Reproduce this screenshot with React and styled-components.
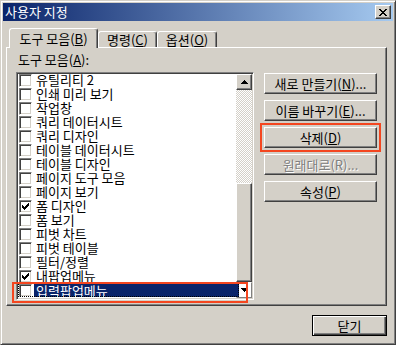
import React from 'react';
import styled, { createGlobalStyle, css } from 'styled-components';

const GlobalStyle = createGlobalStyle`
	html, body {
		margin: 0;
		padding: 0;
		background: #d4d0c8;
	}
	body {
		font-family: "Noto Sans CJK KR", "Noto Sans", sans-serif;
		font-size: 13px;
		color: #000;
	}
	* {
		box-sizing: border-box;
	}
`;

// classic 3D edges
const raised = css`
	border: 1px solid;
	border-color: #fff #404040 #404040 #fff;
	box-shadow: inset -1px -1px #808080;
`;

const sunken = css`
	border: 1px solid;
	border-color: #808080 #fff #fff #808080;
	box-shadow: inset 1px 1px #404040, inset -1px -1px #d4d0c8;
`;

const Window = styled.div`
	width: 396px;
	height: 345px;
	background: #d4d0c8;
	border: 1px solid;
	border-color: #d4d0c8 #404040 #404040 #d4d0c8;
	box-shadow: inset 1px 1px #fff, inset -1px -1px #808080;
	padding: 2px;
	display: flex;
	flex-direction: column;
`;

const TitleBar = styled.div`
	height: 18px;
	flex: 0 0 18px;
	display: flex;
	align-items: center;
	padding: 0 2px 0 2px;
	background: linear-gradient(to right, #0a246a, #a6caf0);
	color: #fff;
`;

const Title = styled.span`
	line-height: 18px;
	font-size: 13px;
`;

const CloseButton = styled.div`
	${raised};
	margin-left: auto;
	width: 16px;
	height: 14px;
	background: #d4d0c8;
	display: grid;
	place-items: center;
`;

const Body = styled.div`
	flex: 1;
	display: flex;
	flex-direction: column;
	padding: 7px 6px 6px 3px;
`;

const TabStrip = styled.div`
	height: 19px;
	display: flex;
	align-items: flex-end;
	padding-left: 3px;
	position: relative;
	z-index: 1;
`;

const Tab = styled.div`
	width: ${(p) => p.$width}px;
	height: ${(p) => (p.$active ? 20 : 16)}px;
	margin-bottom: ${(p) => (p.$active ? -1 : 0)}px;
	padding-top: ${(p) => (p.$active ? 3 : 1)}px;
	background: #d4d0c8;
	border: 1px solid;
	border-bottom: none;
	border-color: #fff #404040 #404040 #fff;
	border-radius: 3px 3px 0 0;
	box-shadow: inset -1px 0 #808080;
	text-align: center;
	line-height: 14px;
	white-space: nowrap;
`;

const Panel = styled.div`
	${raised};
	flex: 0 0 259px;
	display: flex;
	gap: 10px;
	padding: 5px 0 0 9px;
`;

const ListColumn = styled.div`
	width: 238px;
	display: flex;
	flex-direction: column;
`;

const Label = styled.div`
	height: 14px;
	line-height: 14px;
	padding-left: 2px;
	margin-bottom: 5px;
`;

const ListWrap = styled.div`
	position: relative;
`;

const ListBox = styled.div`
	${sunken};
	width: 238px;
	height: 228px;
	padding: 1px;
	background: #fff;
	display: flex;
	overflow: hidden;
`;

const Items = styled.div`
	flex: 1;
	min-width: 0;
	margin-top: -1px;
`;

const Row = styled.div`
	height: 14px;
	display: flex;
	align-items: center;
	padding-left: 1px;
	position: relative;
	z-index: 1;
	${(p) =>
		p.$selected &&
		css`
			margin-right: -3px;
			outline: 1px dotted #000;
			outline-offset: -1px;
		`}
`;

const CheckBox = styled.div`
	${sunken};
	width: 13px;
	height: 13px;
	flex: 0 0 13px;
	background: #fff;
	display: grid;
	place-items: center;
`;

const RowLabel = styled.span`
	margin-left: 2px;
	padding: 0 2px;
	line-height: 14px;
	height: 14px;
	white-space: nowrap;
	${(p) =>
		p.$selected &&
		css`
			flex: 1;
			align-self: stretch;
			height: 13px;
			line-height: 13px;
			margin-top: 1px;
			background: #0a246a;
			color: #fff;
		`}
`;

const ScrollBar = styled.div`
	width: 16px;
	flex: 0 0 16px;
	display: flex;
	flex-direction: column;
`;

const ScrollButton = styled.div`
	${raised};
	height: 16px;
	flex: 0 0 16px;
	background: ${(p) => (p.$blank ? '#fff' : '#d4d0c8')};
	display: grid;
	place-items: center;
	${(p) =>
		p.$blank &&
		css`
			border-color: #fff #808080 #808080 #fff;
			box-shadow: none;
		`}
`;

const Track = styled.div`
	flex: 1;
	background: repeating-conic-gradient(#d4d0c8 0 25%, #fff 0 50%) 0 0 / 2px 2px;
`;

const Thumb = styled.div`
	${raised};
	height: 99px;
	flex: 0 0 99px;
	background: #d4d0c8;
`;

const Marker = styled.div`
	position: absolute;
	left: -4px;
	top: 210px;
	width: 236px;
	height: 21px;
	border: 2px solid #f4461f;
	pointer-events: none;
	z-index: 2;
`;

const ButtonColumn = styled.div`
	width: 113px;
	padding-top: 20px;
	display: flex;
	flex-direction: column;
	gap: 6px;
`;

const Button = styled.div`
	${raised};
	width: ${(p) => p.$width || 113}px;
	height: 21px;
	background: #d4d0c8;
	display: flex;
	align-items: center;
	justify-content: center;
	line-height: 14px;
	white-space: nowrap;
	color: ${(p) => (p.$disabled ? '#808080' : '#000')};
	text-shadow: ${(p) => (p.$disabled ? '1px 1px #fff' : 'none')};
	${(p) =>
		p.$marked &&
		css`
			outline: 2px solid #f4461f;
			outline-offset: 2px;
		`}
	${(p) =>
		p.$default &&
		css`
			border: 1px solid #000;
			box-shadow: inset 1px 1px #fff, inset -1px -1px #404040,
				inset -2px -2px #808080;
		`}
`;

const Footer = styled.div`
	margin-top: 9px;
	display: flex;
	justify-content: flex-end;
`;

const CheckMark = () => (
	<svg width="7" height="7" viewBox="0 0 7 7" shapeRendering="crispEdges">
		<path d="M6 0h1v3h-1v1h-1v1h-1v1h-1v1h-1v-1h-1v-1h-1v-3h1v1h1v1h1v-1h1v-1h1z" fill="#000" />
	</svg>
);

const Arrow = ({ down }) => (
	<svg width="7" height="4" viewBox="0 0 7 4" shapeRendering="crispEdges">
		<path d={down ? 'M0 0h7v1h-1v1h-1v1h-1v1h-1v-1h-1v-1h-1v-1h-1z' : 'M3 0h1v1h1v1h1v1h1v1h-7v-1h1v-1h1v-1h1z'} fill="#000" />
	</svg>
);

const items = [
	{ name: '유틸리티 2' },
	{ name: '인쇄 미리 보기' },
	{ name: '작업창' },
	{ name: '쿼리 데이터시트' },
	{ name: '쿼리 디자인' },
	{ name: '테이블 데이터시트' },
	{ name: '테이블 디자인' },
	{ name: '페이지 도구 모음' },
	{ name: '페이지 보기' },
	{ name: '폼 디자인', checked: true },
	{ name: '폼 보기' },
	{ name: '피벗 차트' },
	{ name: '피벗 테이블' },
	{ name: '필터/정렬' },
	{ name: '내팝업메뉴', checked: true },
	{ name: '입력팝업메뉴', selected: true },
];

export default function App() {
	return (
		<>
			<GlobalStyle />
			<Window>
				<TitleBar>
					<Title>사용자 지정</Title>
					<CloseButton>
						<svg width="8" height="7" viewBox="0 0 8 7" shapeRendering="crispEdges">
							<path
								d="M0 0h2v1h1v1h2v-1h1v-1h2v1h-1v1h-1v1h-1v1h1v1h1v1h1v1h-2v-1h-1v-1h-2v1h-1v1h-2v-1h1v-1h1v-1h1v-1h-1v-1h-1v-1h-1z"
								fill="#000"
							/>
						</svg>
					</CloseButton>
				</TitleBar>
				<Body>
					<TabStrip>
						<Tab $active $width={89}>
							도구 모음(<u>B</u>)
						</Tab>
						<Tab $width={59}>
							명령(<u>C</u>)
						</Tab>
						<Tab $width={60}>
							옵션(<u>O</u>)
						</Tab>
					</TabStrip>
					<Panel>
						<ListColumn>
							<Label>
								도구 모음(<u>A</u>):
							</Label>
							<ListWrap>
								<ListBox>
									<Items>
										{items.map((item) => (
											<Row key={item.name} $selected={item.selected}>
												<CheckBox>{item.checked && <CheckMark />}</CheckBox>
												<RowLabel $selected={item.selected}>{item.name}</RowLabel>
											</Row>
										))}
									</Items>
									<ScrollBar>
										<ScrollButton>
											<Arrow />
										</ScrollButton>
										<Track />
										<Thumb />
										<ScrollButton $blank>
											<Arrow down />
										</ScrollButton>
									</ScrollBar>
								</ListBox>
								<Marker />
							</ListWrap>
						</ListColumn>
						<ButtonColumn>
							<Button>
								새로 만들기(<u>N</u>)...
							</Button>
							<Button>
								이름 바꾸기(<u>E</u>)...
							</Button>
							<Button $marked>
								삭제(<u>D</u>)
							</Button>
							<Button $disabled>원래대로(R)...</Button>
							<Button>
								속성(<u>P</u>)
							</Button>
						</ButtonColumn>
					</Panel>
					<Footer>
						<Button $default $width={75}>
							닫기
						</Button>
					</Footer>
				</Body>
			</Window>
		</>
	);
}
